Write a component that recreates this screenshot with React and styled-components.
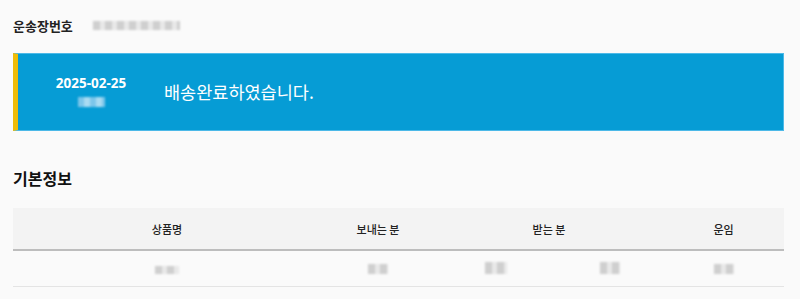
import React from "react";
import styled, { createGlobalStyle } from "styled-components";

const GlobalStyle = createGlobalStyle`
  html, body {
    margin: 0;
    padding: 0;
    background: #fafafa;
  }
  body {
    font-family: "Noto Sans", "Noto Sans CJK KR", sans-serif;
    color: #222;
  }
`;

const Page = styled.div`
  padding: 0 16px 0 13px;
  display: flex;
  flex-direction: column;
`;

const TrackingRow = styled.div`
  display: flex;
  align-items: center;
  gap: 20px;
  height: 30px;
  margin-top: 10px;
`;

const Label = styled.span`
  font-family: "Noto Sans CJK KR", sans-serif;
  font-size: 13px;
  font-weight: 700;
  color: #222;
`;

const Blur = styled.span`
  display: inline-block;
  width: ${(p) => p.$w}px;
  height: ${(p) => p.$h || 9}px;
  background: ${(p) =>
    p.$light
      ? "repeating-linear-gradient(90deg, #7cc6ea 0 6px, #a9dbf2 6px 12px)"
      : "repeating-linear-gradient(90deg, #cfcfcf 0 7px, #e8e8e8 7px 12px)"};
  filter: blur(1.2px);
`;

const StatusBanner = styled.div`
  margin-top: 13px;
  height: 78px;
  box-sizing: border-box;
  background: #069cd5;
  border: 1px solid #4cb9e8;
  border-left: 5px solid #efbd08;
  display: flex;
  align-items: center;
  color: #fff;
`;

const DateBlock = styled.div`
  width: 146px;
  display: flex;
  flex-direction: column;
  align-items: center;
  gap: 6px;
  margin-top: -2px;
`;

const DateText = styled.span`
  font-size: 13.5px;
  font-weight: 700;
  line-height: 15px;
`;

const Message = styled.span`
  font-family: "Noto Sans CJK KR", sans-serif;
  font-size: 17.5px;
  font-weight: 400;
  line-height: 20px;
`;

const SectionTitle = styled.h2`
  margin: 37px 0 0;
  font-family: "Noto Sans CJK KR", sans-serif;
  font-size: 16px;
  font-weight: 700;
  line-height: 20px;
  color: #111;
`;

const InfoTable = styled.table`
  margin-top: 20px;
  width: 100%;
  border-collapse: collapse;
  table-layout: fixed;
  font-family: "Noto Sans CJK KR", sans-serif;
  font-size: 11px;
`;

const HeadCell = styled.th`
  height: 41px;
  padding: 0;
  background: #f3f3f3;
  font-weight: 500;
  color: #222;
  text-align: center;
  border-bottom: 2px solid #bdbdbd;
`;

const BodyCell = styled.td`
  height: 35px;
  padding: 0;
  text-align: center;
  border-bottom: 1px solid #e4e4e4;
`;

const cols = [308, 114, 122, 106, 121];

export default function App() {
  return (
    <>
      <GlobalStyle />
      <Page>
        <TrackingRow>
          <Label>운송장번호</Label>
          <Blur $w={87} $h={9} />
        </TrackingRow>
        <StatusBanner>
          <DateBlock>
            <DateText>2025-02-25</DateText>
            <Blur $light $w={27} $h={10} />
          </DateBlock>
          <Message>배송완료하였습니다.</Message>
        </StatusBanner>
        <SectionTitle>기본정보</SectionTitle>
        <InfoTable>
          <colgroup>
            {cols.map((w, i) => (
              <col key={i} style={{ width: w }} />
            ))}
          </colgroup>
          <thead>
            <tr>
              <HeadCell>상품명</HeadCell>
              <HeadCell>보내는 분</HeadCell>
              <HeadCell colSpan={2}>받는 분</HeadCell>
              <HeadCell>운임</HeadCell>
            </tr>
          </thead>
          <tbody>
            <tr>
              <BodyCell><Blur $w={24} $h={8} /></BodyCell>
              <BodyCell><Blur $w={20} $h={10} /></BodyCell>
              <BodyCell><Blur $w={22} $h={12} /></BodyCell>
              <BodyCell><Blur $w={20} $h={12} /></BodyCell>
              <BodyCell><Blur $w={20} $h={10} /></BodyCell>
            </tr>
          </tbody>
        </InfoTable>
      </Page>
    </>
  );
}
